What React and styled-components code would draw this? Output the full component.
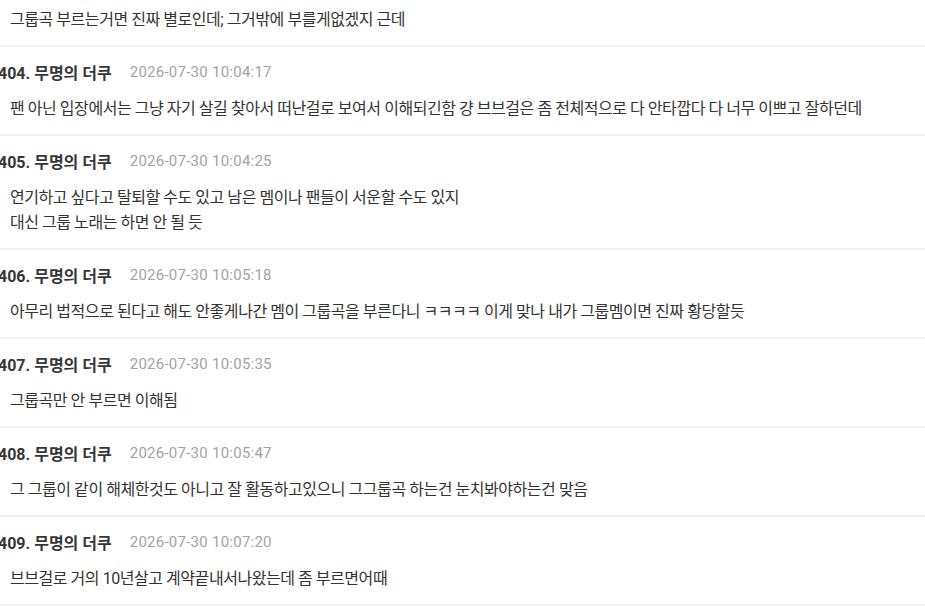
import React from 'react';
import styled, { createGlobalStyle } from 'styled-components';

const GlobalStyle = createGlobalStyle`
  html, body {
    margin: 0;
    padding: 0;
    background: #fff;
    overflow: hidden;
  }
  body {
    font-family: Roboto, "Noto Sans CJK KR", sans-serif;
    color: #333;
  }
`;

const List = styled.ul`
  list-style: none;
  margin: -42px 0 0 -2px;
  padding: 0;
`;

const Item = styled.li`
  padding: 15px 0 13px;
  border-bottom: 2px solid #f1f1f1;
`;

const Head = styled.div`
  display: flex;
  align-items: center;
  gap: 18px;
  height: 20px;
  margin-bottom: 14px;
  white-space: nowrap;
`;

const Name = styled.span`
  font-size: 16px;
  font-weight: 700;
  color: #363636;
`;

const Time = styled.span`
  font-size: 15px;
  color: #a3a3a3;
  letter-spacing: 0.25px;
`;

const Body = styled.div`
  padding-left: 12px;
  font-size: 16px;
  line-height: 25px;
  letter-spacing: -0.45px;
  color: #333;
  white-space: pre-line;
`;

const comments = [
  { no: 403, time: '2026-07-30 10:04:02', text: '그룹곡 부르는거면 진짜 별로인데; 그거밖에 부를게없겠지 근데' },
  { no: 404, time: '2026-07-30 10:04:17', text: '팬 아닌 입장에서는 그냥 자기 살길 찾아서 떠난걸로 보여서 이해되긴함 걍 브브걸은 좀 전체적으로 다 안타깝다 다 너무 이쁘고 잘하던데' },
  { no: 405, time: '2026-07-30 10:04:25', text: '연기하고 싶다고 탈퇴할 수도 있고 남은 멤이나 팬들이 서운할 수도 있지\n대신 그룹 노래는 하면 안 될 듯' },
  { no: 406, time: '2026-07-30 10:05:18', text: '아무리 법적으로 된다고 해도 안좋게나간 멤이 그룹곡을 부른다니 ㅋㅋㅋㅋ 이게 맞나 내가 그룹멤이면 진짜 황당할듯' },
  { no: 407, time: '2026-07-30 10:05:35', text: '그룹곡만 안 부르면 이해됨' },
  { no: 408, time: '2026-07-30 10:05:47', text: '그 그룹이 같이 해체한것도 아니고 잘 활동하고있으니 그그룹곡 하는건 눈치봐야하는건 맞음' },
  { no: 409, time: '2026-07-30 10:07:20', text: '브브걸로 거의 10년살고 계약끝내서나왔는데 좀 부르면어때' },
];

export default function App() {
  return (
    <>
      <GlobalStyle />
      <List>
        {comments.map((c) => (
          <Item key={c.no}>
            <Head>
              <Name>{c.no}. 무명의 더쿠</Name>
              <Time>{c.time}</Time>
            </Head>
            <Body>{c.text}</Body>
          </Item>
        ))}
      </List>
    </>
  );
}
